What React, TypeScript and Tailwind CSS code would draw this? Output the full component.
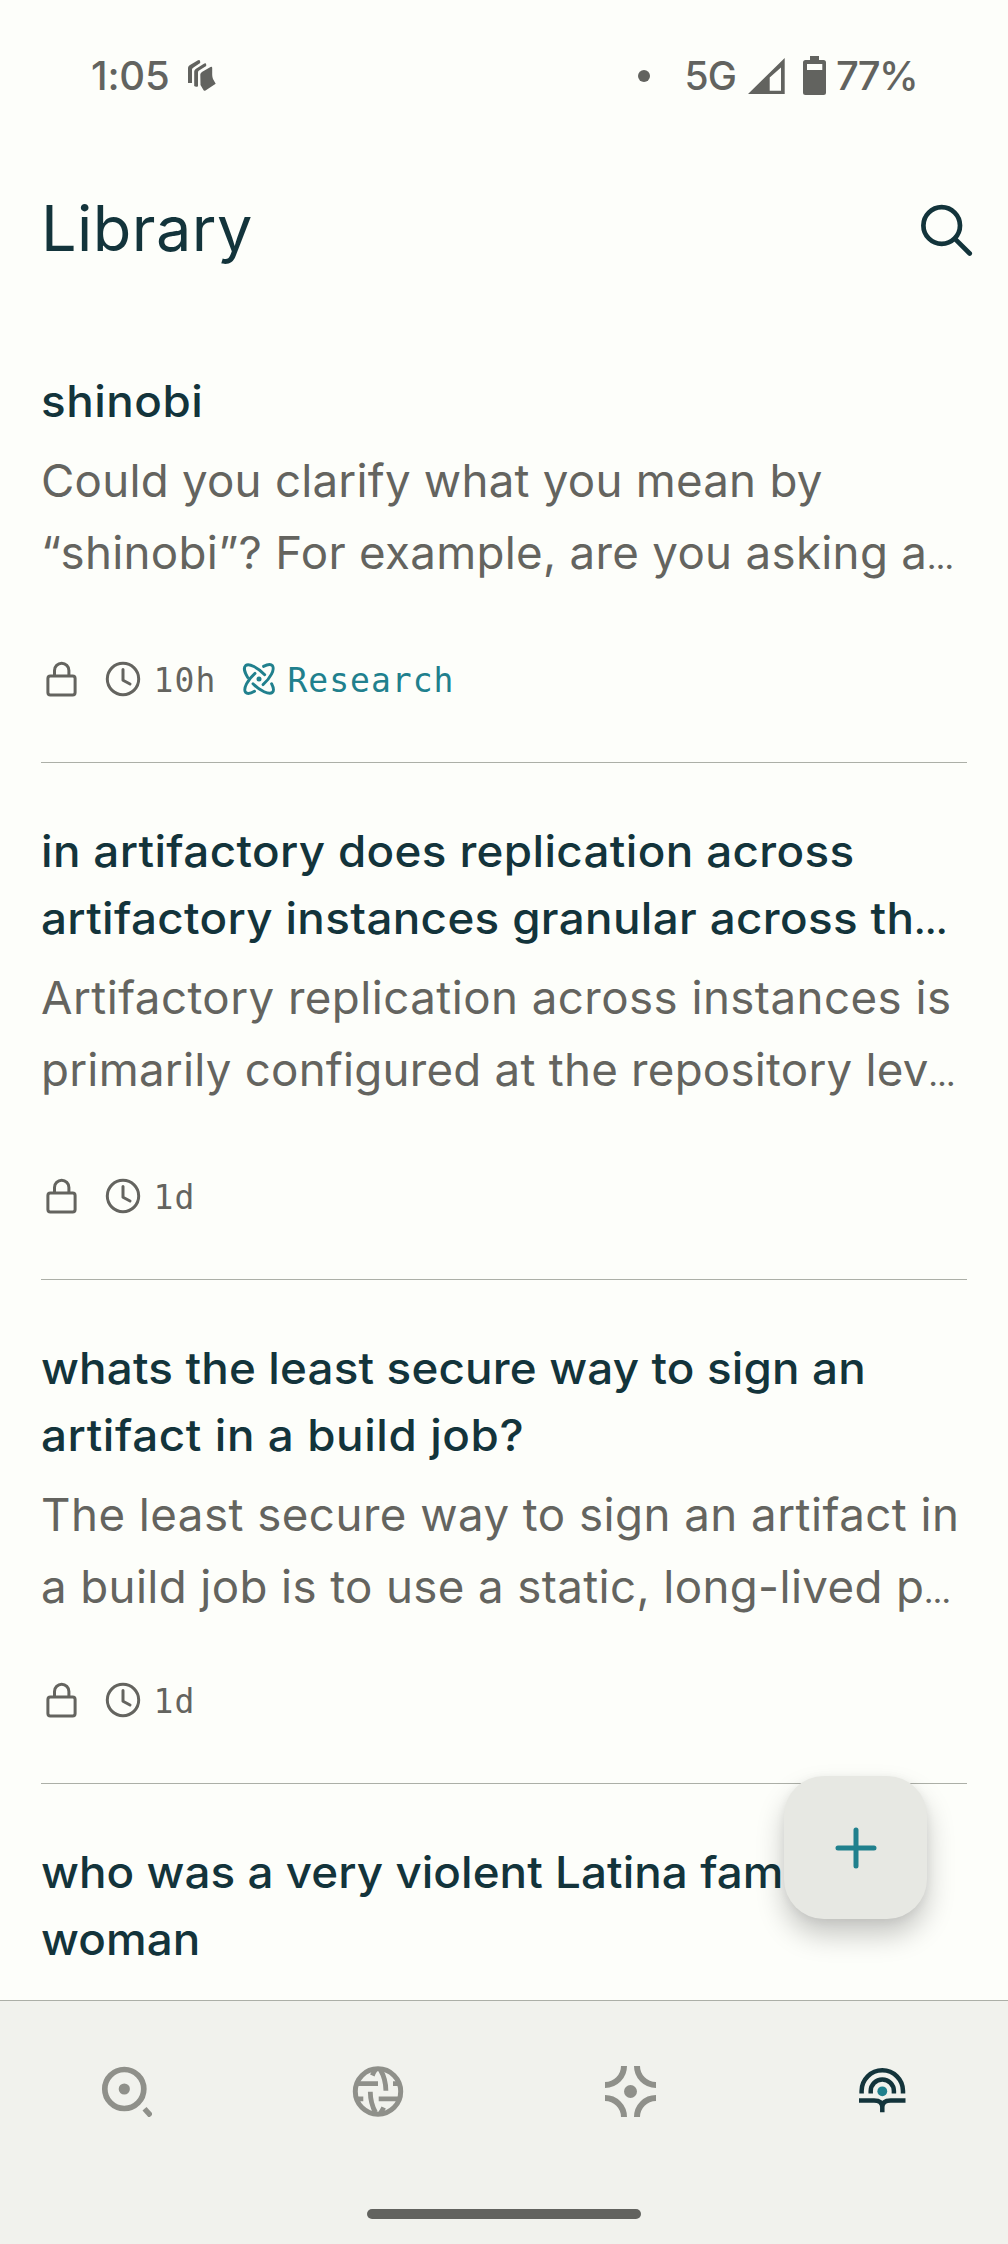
import type { ReactNode } from "react";

type Line = { text: string; tracking: string; clipped?: boolean };
type Thread = { title: Line[]; body: Line[]; age?: string; research?: boolean; metaGap?: string };

const threads: Thread[] = [
  {
    title: [{ text: "shinobi", tracking: "tracking-[0.5px]" }],
    body: [
      { text: "Could you clarify what you mean by", tracking: "tracking-[0.22px]" },
      { text: "“shinobi”? For example, are you asking a", tracking: "tracking-[0.29px]", clipped: true },
    ],
    age: "10h",
    research: true,
    metaGap: "mt-[72px]",
  },
  {
    title: [
      { text: "in artifactory does replication across", tracking: "tracking-[0.35px]" },
      { text: "artifactory instances granular across th", tracking: "tracking-[0.34px]", clipped: true },
    ],
    body: [
      { text: "Artifactory replication across instances is", tracking: "tracking-[0.43px]" },
      { text: "primarily configured at the repository lev", tracking: "tracking-[0.23px]", clipped: true },
    ],
    age: "1d",
    metaGap: "mt-[72px]",
  },
  {
    title: [
      { text: "whats the least secure way to sign an", tracking: "tracking-[0.16px]" },
      { text: "artifact in a build job?", tracking: "tracking-[0.58px]" },
    ],
    body: [
      { text: "The least secure way to sign an artifact in", tracking: "tracking-[0.45px]" },
      { text: "a build job is to use a static, long-lived p", tracking: "tracking-[0.36px]", clipped: true },
    ],
    age: "1d",
    metaGap: "mt-[59px]",
  },
  {
    title: [
      { text: "who was a very violent Latina famous", tracking: "tracking-[0.06px]" },
      { text: "woman", tracking: "tracking-[0.1px]" },
    ],
    body: [],
  },
];

function StackIcon() {
  return (
    <svg className="ml-[19px] h-8 w-7" viewBox="187 61 28 32" fill="#62635f">
      <path d="M187 84V69.500C187 68 187.500 67 189 66L197 61.300Q199.200 60.500 199.200 62.700V64L192.500 68.500C191 69.500 191 70 191 71.500V84Z" />
      <path d="M193.200 87V73C193.200 71.500 193.700 70.500 195 69.700L202.500 65Q205 63.500 205.200 65.500V67L198.500 71.300C197.300 72 197 72.500 197 74V87.300Q195 88.500 193.200 87Z" />
      <path d="M199.300 76C199.300 74.500 200 73.500 201.300 72.700L209.500 68Q211.200 67.200 211.200 69V76Q211.300 78 212 80L214.700 84.800L204.500 91.500Q203 92.500 202.300 90.800L199.500 86Z" />
    </svg>
  );
}

function SignalIcon() {
  return (
    <svg className="ml-3 h-9 w-[37px]" viewBox="749 58 37 36" fill="#62635f" fillRule="evenodd">
      <path d="M785.700 58V94H749ZM782 67.500L770.700 77.500V90.700H782Z" />
    </svg>
  );
}

function BatteryIcon() {
  return (
    <svg className="ml-[18px] h-10 w-6" viewBox="804 56 24 40" fill="#62635f" fillRule="evenodd">
      <path d="M811 56H820V60H824.500Q827 60 827 62.500V92.500Q827 95 824.500 95H806.500Q804 95 804 92.500V62.500Q804 60 806.500 60H811ZM808 64V70H823.300V64Z" />
    </svg>
  );
}

function SearchIcon() {
  return (
    <svg className="mt-1 h-[52px] w-[52px]" viewBox="922 204 52 52" fill="none" stroke="#13343b" strokeWidth="4.700" strokeLinecap="round">
      <circle cx="942.700" cy="225.500" r="18.300" />
      <path d="M956 238.800L970.700 253.500" />
    </svg>
  );
}

function LockIcon() {
  return (
    <svg className="h-9 w-[31px]" viewBox="45.500 661.500 31 36" fill="none" stroke="#64645f" strokeWidth="3">
      <rect x="47.400" y="676.500" width="27.200" height="18.900" rx="2.500" />
      <path d="M54 676V671A7.200 7.200 0 0 1 68.400 671V676" />
    </svg>
  );
}

function ClockIcon() {
  return (
    <svg className="ml-7 h-9 w-9" viewBox="104.300 661.300 36 36" fill="none" stroke="#64645f" strokeWidth="3" strokeLinecap="round" strokeLinejoin="round">
      <circle cx="122.300" cy="679.300" r="15.700" />
      <path d="M122.300 669.800V680.500L129.300 684.300" />
    </svg>
  );
}

function AtomIcon() {
  return (
    <svg className="ml-6 h-9 w-9" viewBox="-18 -18 36 36" fill="none" stroke="#20808d" strokeWidth="2.900" strokeLinecap="round">
      <circle r="2.500" fill="#20808d" stroke="none" />
      <path d="M-11.300 -1.500C-14.500 -6.500 -15.500 -11.500 -13.300 -13.500C-10 -16 -1 -11.500 5.700 -4.300" />
      <path d="M12.600 4.700C14.600 8.500 15 12 13.300 13.500C10 16 1 11.800 -6 4.800" />
      <path d="M4.500 -12.600C8.500 -14.700 12 -15 13.500 -13.300C16 -9.500 11.500 -1 4 5.600" />
      <path d="M-4.500 12.300C-8.500 14.700 -12 15 -13.500 13.300C-16 9.500 -11.500 1 -4 -5.600" />
    </svg>
  );
}

function NavItem({ label, children }: { label: string; children: ReactNode }) {
  return (
    <button aria-label={label} className="flex justify-center">
      <svg className="h-[52px] w-[52px]" viewBox="-26 -26 52 52" fill="none" stroke="#8f908a" strokeWidth="6">
        {children}
      </svg>
    </button>
  );
}

function TextLine({ line, dots }: { line: Line; dots: string }) {
  return (
    <span className={`block whitespace-nowrap ${line.tracking}`}>
      {line.text}
      {line.clipped && <span className={`leading-none tracking-normal ${dots}`}>…</span>}
    </span>
  );
}

function ThreadCard({ thread }: { thread: Thread }) {
  return (
    <article className="border-b border-[#acafa7] pt-[55px] pb-[65px]">
      <h2 className="origin-left scale-x-[1.04] text-[44px] leading-[67px] font-medium text-[#13343b]">
        {thread.title.map((line) => (
          <TextLine key={line.text} line={line} dots="text-[30px] font-extrabold" />
        ))}
      </h2>
      <p className="mt-2.5 origin-left scale-x-[1.015] text-[45px] leading-[72px] text-[#64645f]">
        {thread.body.map((line) => (
          <TextLine key={line.text} line={line} dots="text-[26px] font-bold" />
        ))}
      </p>
      {thread.age && (
        <div className={`flex h-9 items-center pl-[4.500px] font-['DejaVu_Sans_Mono',monospace] text-[33px] leading-9 tracking-[1.130px] text-[#64645f] ${thread.metaGap}`}>
          <LockIcon />
          <ClockIcon />
          <span className="mt-[3px] ml-[13px]">{thread.age}</span>
          {thread.research && (
            <span className="flex items-center text-[#20808d]">
              <AtomIcon />
              <span className="mt-[3px] ml-[11px] tracking-[1px]">Research</span>
            </span>
          )}
        </div>
      )}
    </article>
  );
}

export default function App() {
  return (
    <div className="relative flex h-[2244px] w-[1008px] flex-col overflow-hidden bg-[#fdfefa] font-['Inter',sans-serif]">
      <div className="flex h-[151px] shrink-0 items-center justify-between pr-[91px] pl-[91px] text-[40px] leading-none font-medium text-[#62635f]">
        <div className="flex items-center">
          <span className="tracking-[-0.2px]">1:05</span>
          <StackIcon />
        </div>
        <div className="flex items-center">
          <span className="mr-[35px] h-3 w-3 rounded-full bg-[#62635f]" />
          <span className="text-[39px] tracking-[-1px]">5G</span>
          <SignalIcon />
          <BatteryIcon />
          <span className="ml-[9px] tracking-[-1.700px]">77%</span>
        </div>
      </div>

      <header className="flex h-[154px] shrink-0 items-center justify-between pr-[35px] pl-[41px]">
        <h1 className="text-[63px] leading-none tracking-[0.460px] text-[#13343b]">Library</h1>
        <button aria-label="Search">
          <SearchIcon />
        </button>
      </header>

      <main className="mt-2 min-h-0 flex-1 overflow-hidden px-[41px]">
        {threads.map((thread) => (
          <ThreadCard key={thread.title[0].text} thread={thread} />
        ))}
      </main>

      <button aria-label="New thread" className="absolute top-[1776px] left-[784px] flex h-[143px] w-[143px] items-center justify-center rounded-[40px] bg-[#e7e8e3] shadow-[0_16px_28px_rgba(0,0,0,0.22),0_2px_10px_rgba(0,0,0,0.06)]">
        <svg className="h-[42px] w-[42px]" viewBox="0 0 42 42" stroke="#20808d" strokeWidth="5" strokeLinecap="round">
          <path d="M21 3V39M3 21H39" />
        </svg>
      </button>

      <nav className="z-10 flex h-[244px] shrink-0 flex-col border-t border-[#acafa7] bg-[#f1f2ed]">
        <div className="grid grid-cols-4 pt-[64px]">
          <NavItem label="Home">
            <circle cx="-1.700" cy="-2" r="19.500" strokeWidth="5.700" />
            <circle cx="-1.700" cy="-2" r="5.600" fill="#8f908a" stroke="none" />
            <path d="M18.500 17.700L25 25" strokeWidth="5.400" />
          </NavItem>
          <NavItem label="Discover">
            <circle cy="0.500" r="22.700" strokeWidth="5" />
            <g strokeWidth="4.800">
              <path d="M-22 -7.300H0M0.700 7.800H22M-22 7.800H-14.700M15 -7.300H22" />
              <path d="M2.500 -21Q7.800 -12 7.900 -0.200M-2.500 21.500Q-7.600 12 -7.700 0.700" />
              <path d="M-5.700 -15.500Q-4.500 -18.500 -2.500 -21.500M5.700 16.500Q4.500 19 2.500 22" />
            </g>
          </NavItem>
          <NavItem label="Spaces">
            <circle cx="0.500" cy="0.500" r="6.500" fill="#8f908a" stroke="none" />
            <path d="M-6 -25A19 19 0 0 1 -25 -6M7 -25A19 19 0 0 0 26 -6M-6 26A19 19 0 0 0 -25 7M7 26A19 19 0 0 1 26 7" />
          </NavItem>
          <NavItem label="Library">
            <circle cx="0.300" cy="0.300" r="4.900" fill="#20808d" stroke="none" />
            <g stroke="#13343b" strokeWidth="4.500">
              <path d="M-20.400 2.500V0A20.700 20.700 0 0 1 21 0V2.500" />
              <path d="M-11.300 2.500V0A11.600 11.600 0 0 1 11.900 0V2.500" />
              <path d="M-23 9.400H-8Q0.300 9.400 0.300 16V21.300V16Q0.300 9.400 8.600 9.400H23.500" />
            </g>
          </NavItem>
        </div>
        <div className="mx-auto mt-[92px] h-2.5 w-[274px] rounded-full bg-[#62635f]" />
      </nav>
    </div>
  );
}
